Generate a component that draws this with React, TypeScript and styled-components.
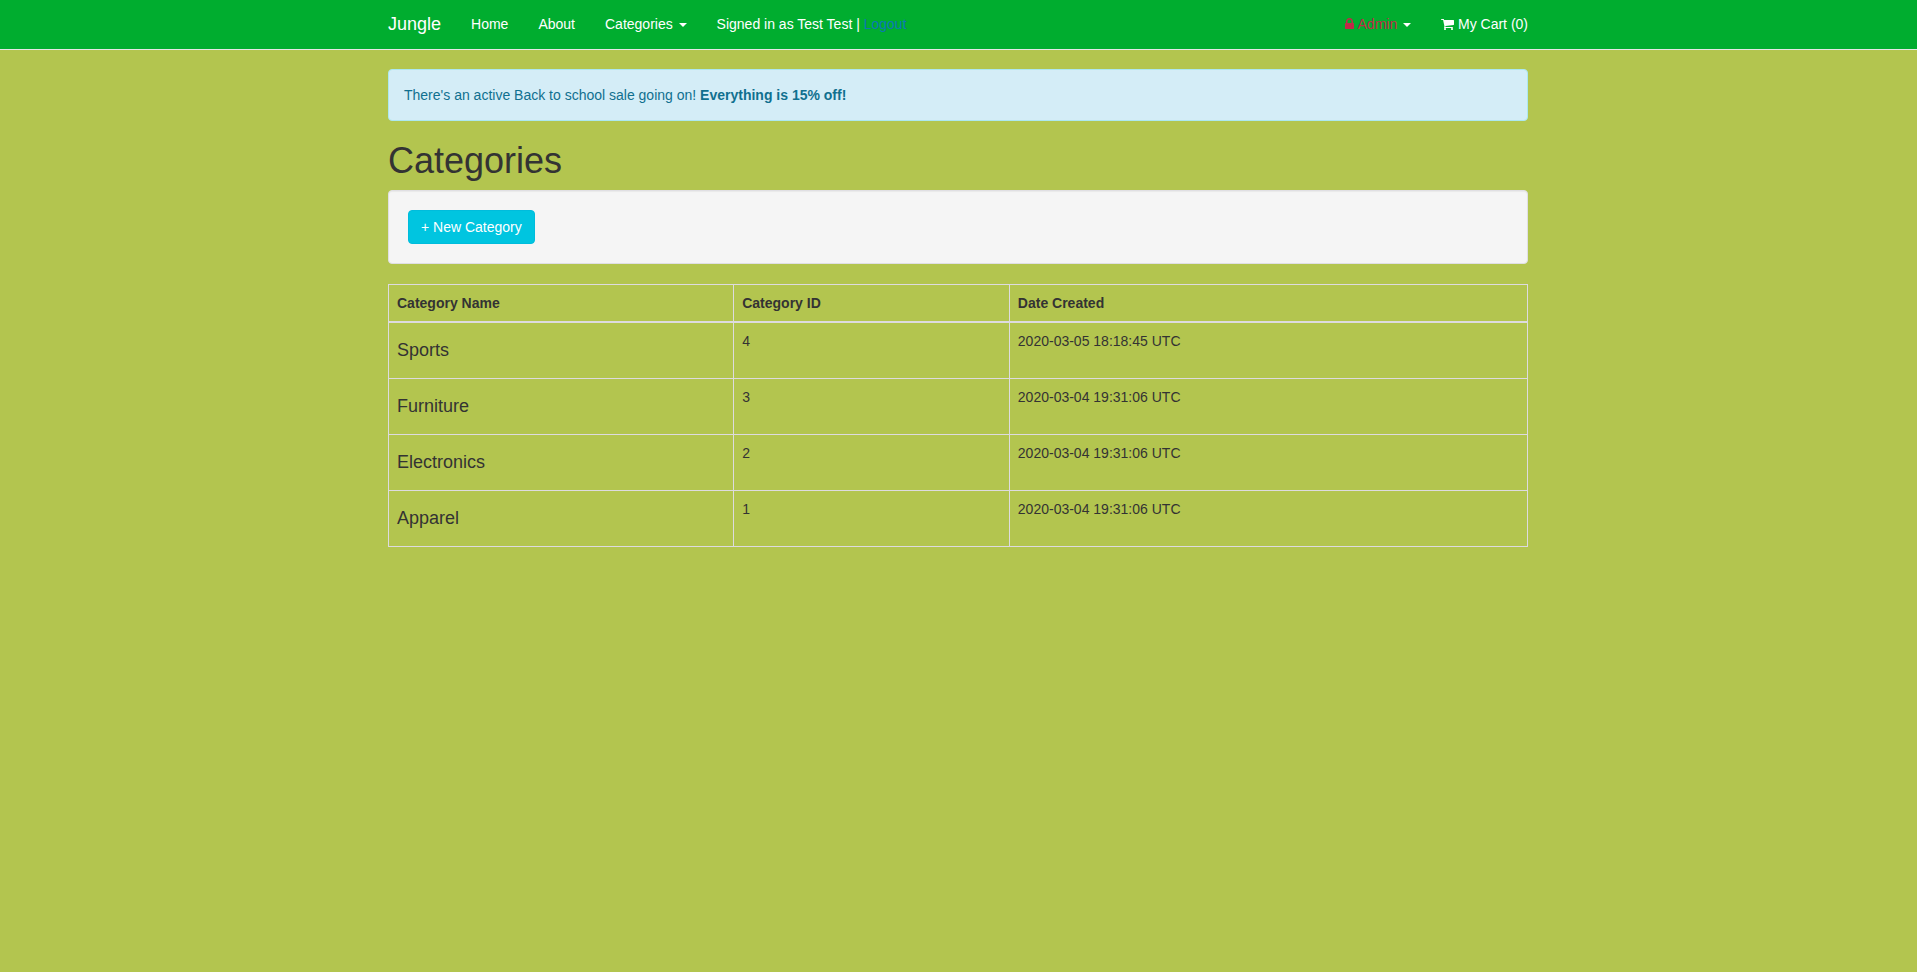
import React from "react";
import styled, { createGlobalStyle } from "styled-components";

const GlobalStyle = createGlobalStyle`
  *, *::before, *::after { box-sizing: border-box; }
  body {
    margin: 0;
    background: #b3c54f;
    color: #333;
    font: 14px/20px "Helvetica Neue", Helvetica, "Liberation Sans", Arial, sans-serif;
  }
`;

const Container = styled.div`
  width: 100%;
  max-width: 1171px;
  margin: 0 auto;
  padding: 0 16px 0 15px;
`;

const Navbar = styled.nav`
  background: #00ad2f;
  border-bottom: 1px solid #e7e7e7;
  margin-bottom: 19px;
`;

const NavRow = styled(Container)`
  display: flex;
  flex-wrap: wrap;
`;

const Brand = styled.a`
  padding: 14px 15px 15px 0;
  color: #fff;
  font-size: 18px;
  text-decoration: none;
`;

const NavList = styled.ul<{ $end?: boolean }>`
  display: flex;
  flex-wrap: wrap;
  list-style: none;
  margin: 0 ${(p) => (p.$end ? "-15px 0 auto" : "0")};
  padding: 0;
`;

const NavLink = styled.a<{ $danger?: boolean }>`
  display: block;
  padding: 14px 15px 15px;
  color: ${(p) => (p.$danger ? "#bf2a48" : "#fff")};
  text-decoration: none;
`;

const NavText = styled.p`
  margin: 14px 15px 15px;
  color: #fff;
`;

const LogoutLink = styled.a`
  color: #0d77b5;
  text-decoration: none;
`;

const Caret = styled.span`
  display: inline-block;
  margin-left: 2px;
  vertical-align: middle;
  border-top: 4px solid #fff;
  border-right: 4px solid transparent;
  border-left: 4px solid transparent;
`;

const Icon = styled.svg`
  height: 14px;
  vertical-align: -2px;
  fill: currentColor;
`;

const Alert = styled.div`
  margin-bottom: 20px;
  padding: 15px;
  border: 1px solid #ace8f0;
  border-radius: 4px;
  background: #d4edf7;
  color: #10708f;
`;

const Title = styled.h1`
  margin: 0 0 10px;
  font-size: 36px;
  font-weight: 500;
  line-height: 39px;
`;

const Well = styled.div`
  margin-bottom: 20px;
  padding: 19px;
  border: 1px solid #e0dfe3;
  border-radius: 4px;
  background: #f5f5f5;
  box-shadow: inset 0 1px 1px rgba(0, 0, 0, 0.05);
`;

const Button = styled.button`
  display: block;
  padding: 6px 12px;
  border: 1px solid #00bcdc;
  border-radius: 4px;
  background: #00c5e0;
  color: #fff;
  font: inherit;
  cursor: pointer;
`;

const Table = styled.table`
  width: 100%;
  margin-bottom: 20px;
  border-collapse: collapse;
  border: 1px solid #dddbdf;
`;

const HeadCell = styled.th`
  padding: 8px;
  border: 1px solid #dddbdf;
  border-bottom-width: 2px;
  text-align: left;
`;

const Cell = styled.td`
  padding: 8px;
  border: 1px solid #dddbdf;
  vertical-align: top;
`;

const CategoryName = styled.h4`
  margin: 10px 0;
  font-size: 18px;
  font-weight: 500;
  line-height: 19px;
`;

const LockIcon = () => (
  <Icon viewBox="0 0 1152 1792" width="9" aria-hidden="true">
    <path d="M320 768h512v-192q0-106-75-181t-181-75-181 75-75 181v192zm832 96v576q0 40-28 68t-68 28h-960q-40 0-68-28t-28-68v-576q0-40 28-68t68-28h32v-192q0-184 132-316t316-132 316 132 132 316v192h32q40 0 68 28t28 68z" />
  </Icon>
);

const CartIcon = () => (
  <Icon viewBox="0 0 1664 1792" width="13" aria-hidden="true">
    <path d="M640 1536q0 52-38 90t-90 38-90-38-38-90 38-90 90-38 90 38 38 90zm896 0q0 52-38 90t-90 38-90-38-38-90 38-90 90-38 90 38 38 90zm128-1088v512q0 24-16.5 42.5t-40.5 21.5l-1044 122q13 60 13 70 0 16-24 64h920q26 0 45 19t19 45-19 45-45 19h-1024q-26 0-45-19t-19-45q0-11 8-31.500t16-36 21.500-40 15.500-29.500l-177-823h-204q-26 0-45-19t-19-45 19-45 45-19h256q16 0 28.500 6.500t19.500 15.500 13 24.500 8 26 5.500 29.500 4.500 26h1201q26 0 45 19t19 45z" />
  </Icon>
);

const categories = [
  { id: 4, name: "Sports", created: "2020-03-05 18:18:45 UTC" },
  { id: 3, name: "Furniture", created: "2020-03-04 19:31:06 UTC" },
  { id: 2, name: "Electronics", created: "2020-03-04 19:31:06 UTC" },
  { id: 1, name: "Apparel", created: "2020-03-04 19:31:06 UTC" },
];

export default function App() {
  return (
    <>
      <GlobalStyle />
      <Navbar>
        <NavRow>
          <Brand href="#">Jungle</Brand>
          <NavList>
            <li><NavLink href="#">Home</NavLink></li>
            <li><NavLink href="#">About</NavLink></li>
            <li><NavLink href="#">Categories <Caret /></NavLink></li>
          </NavList>
          <NavText>
            Signed in as Test Test | <LogoutLink href="#">Logout</LogoutLink>
          </NavText>
          <NavList $end>
            <li><NavLink href="#" $danger><LockIcon /> Admin <Caret /></NavLink></li>
            <li><NavLink href="#"><CartIcon /> My Cart (0)</NavLink></li>
          </NavList>
        </NavRow>
      </Navbar>
      <Container as="main">
        <Alert role="status">
          There's an active Back to school sale going on! <strong>Everything is 15% off!</strong>
        </Alert>
        <Title>Categories</Title>
        <Well>
          <Button type="button">+ New Category</Button>
        </Well>
        <Table>
          <thead>
            <tr>
              <HeadCell scope="col">Category Name</HeadCell>
              <HeadCell scope="col">Category ID</HeadCell>
              <HeadCell scope="col">Date Created</HeadCell>
            </tr>
          </thead>
          <tbody>
            {categories.map((c) => (
              <tr key={c.id}>
                <Cell><CategoryName>{c.name}</CategoryName></Cell>
                <Cell>{c.id}</Cell>
                <Cell>{c.created}</Cell>
              </tr>
            ))}
          </tbody>
        </Table>
      </Container>
    </>
  );
}
